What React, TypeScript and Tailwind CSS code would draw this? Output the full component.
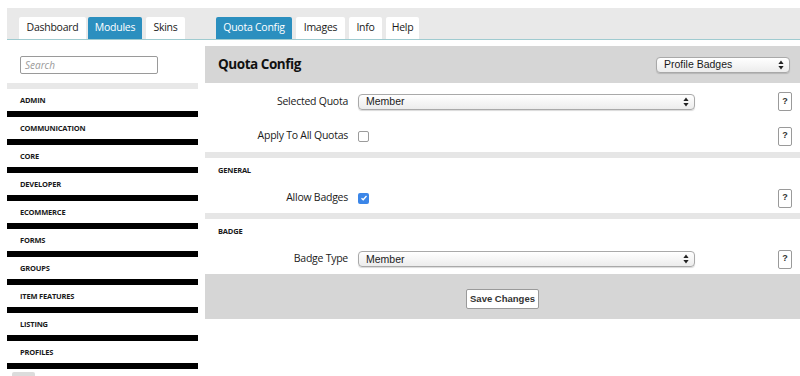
import React from "react";

function UpDown() {
  return (
    <svg width="6" height="10" viewBox="0 0 6 10" className="shrink-0">
      <path d="M3 0.5 L5.6 4 H0.4 Z" fill="#222" />
      <path d="M3 9.5 L5.6 6 H0.4 Z" fill="#222" />
    </svg>
  );
}

function Select({ text, w }: { text: string; w: string }) {
  return (
    <div
      className={`${w} h-[16px] flex items-center justify-between pl-[7px] pr-[5px] rounded-[4px] border border-[#a9a9a9] bg-gradient-to-b from-white to-[#ececec] shadow-[0_1px_1px_rgba(0,0,0,0.15)] text-[10.5px] text-[#1a1a1a] font-['Liberation_Sans',Arial,sans-serif]`}
    >
      <span className="leading-none">{text}</span>
      <UpDown />
    </div>
  );
}

function Help() {
  return (
    <div className="w-[14px] h-[19px] border border-[#9a9a9a] rounded-[2px] bg-white flex items-center justify-center text-[9px] font-bold text-[#333] font-['Liberation_Sans',Arial,sans-serif]">
      ?
    </div>
  );
}

function Checkbox({ checked }: { checked?: boolean }) {
  if (checked)
    return (
      <div className="w-[11px] h-[11px] rounded-[2px] bg-[#3b86e8] flex items-center justify-center">
        <svg width="8" height="8" viewBox="0 0 8 8">
          <path d="M1.5 4.2 L3.2 5.8 L6.5 2" stroke="white" strokeWidth="1.3" fill="none" />
        </svg>
      </div>
    );
  return <div className="w-[11px] h-[11px] rounded-[2px] border border-[#9b9b9b] bg-white" />;
}

function Row({
  label,
  h,
  children,
}: {
  label: string;
  h: string;
  children: React.ReactNode;
}) {
  return (
    <div className={`${h} flex items-center`}>
      <div className="w-[143px] text-right text-[10.5px] tracking-[-0.25px] text-[#1a1a1a]">{label}</div>
      <div className="ml-[10px] flex-1 flex items-center">{children}</div>
      <div className="mr-[8px]">
        <Help />
      </div>
    </div>
  );
}

function Tab({ label, w, active }: { label: string; w: string; active?: boolean }) {
  return (
    <div
      className={`${w} h-[22px] flex items-center justify-center text-[10.5px] tracking-[-0.25px] rounded-t-[2px] ${
        active ? "bg-[#2b8fbf] text-white" : "bg-white text-[#1a1a1a]"
      }`}
    >
      {label}
    </div>
  );
}

const modules = [
  "ADMIN",
  "COMMUNICATION",
  "CORE",
  "DEVELOPER",
  "ECOMMERCE",
  "FORMS",
  "GROUPS",
  "ITEM FEATURES",
  "LISTING",
  "PROFILES",
];

export default function App() {
  return (
    <div className="w-[800px] h-[376px] overflow-hidden bg-white font-['Open_Sans',sans-serif]">
      <div className="ml-[7px] mt-[8px] h-[32px] bg-[#e9e9e9] border-b border-[#9fcbd0] flex items-end">
        <div className="flex ml-[12px]">
          <Tab label="Dashboard" w="w-[67px]" />
          <div className="w-[2px]" />
          <Tab label="Modules" w="w-[54px]" active />
          <div className="w-[4px]" />
          <Tab label="Skins" w="w-[39px]" />
        </div>
        <div className="flex gap-[4px] ml-[31px]">
          <Tab label="Quota Config" w="w-[76px]" active />
          <Tab label="Images" w="w-[49px]" />
          <Tab label="Info" w="w-[33px]" />
          <Tab label="Help" w="w-[33px]" />
        </div>
      </div>
      <div className="flex ml-[7px] gap-[7px]">
        <div className="w-[191px] shrink-0">
          <div className="pt-[16px] pl-[13px]">
            <div className="w-[138px] h-[18px] border border-[#9a9a9a] rounded-[2px] flex items-center px-[4px] text-[10px] italic text-[#9a9a9a]">
              Search
            </div>
          </div>
          <div className="mt-[9px] h-[6px] bg-[#e8e8e8]" />
          {modules.map((m) => (
            <div key={m}>
              <div className="h-[22px] flex items-center pt-[2px] pl-[13px] text-[7.5px] tracking-[-0.2px] font-bold text-[#1a1a1a]">
                {m}
              </div>
              <div className="h-[6px] bg-black" />
            </div>
          ))}
          <div className="mt-[3px] ml-[5px] w-[23px] h-[4px] bg-[#dcdcdc] rounded-t-[2px]" />
        </div>
        <div className="flex-1">
          <div className="mt-[6px] h-[37px] bg-[#d6d6d6] flex items-center justify-between pl-[13px] pr-[10px]">
            <div className="text-[13.5px] tracking-[-0.45px] font-bold text-[#111]">Quota Config</div>
            <Select text="Profile Badges" w="w-[134px]" />
          </div>
          <Row label="Selected Quota" h="h-[37px]">
            <Select text="Member" w="w-[337px]" />
          </Row>
          <Row label="Apply To All Quotas" h="h-[32px]">
            <Checkbox />
          </Row>
          <div className="h-[6px] bg-[#e6e6e6]" />
          <div className="h-[25px] flex items-center pl-[13px] text-[7.5px] tracking-[-0.2px] font-bold text-[#1a1a1a]">
            GENERAL
          </div>
          <Row label="Allow Badges" h="h-[30px]">
            <Checkbox checked />
          </Row>
          <div className="h-[6px] bg-[#e6e6e6]" />
          <div className="h-[25px] flex items-center pl-[13px] text-[7.5px] tracking-[-0.2px] font-bold text-[#1a1a1a]">
            BADGE
          </div>
          <Row label="Badge Type" h="h-[30px]">
            <Select text="Member" w="w-[337px]" />
          </Row>
          <div className="h-[45px] bg-[#d6d6d6] flex items-center justify-center">
            <div className="mt-[5px] h-[20px] w-[73px] justify-center bg-white border border-[#9a9a9a] rounded-[2px] flex items-center text-[9.5px] font-bold text-[#333] font-['Liberation_Sans',Arial,sans-serif]">
              Save Changes
            </div>
          </div>
        </div>
      </div>
    </div>
  );
}
